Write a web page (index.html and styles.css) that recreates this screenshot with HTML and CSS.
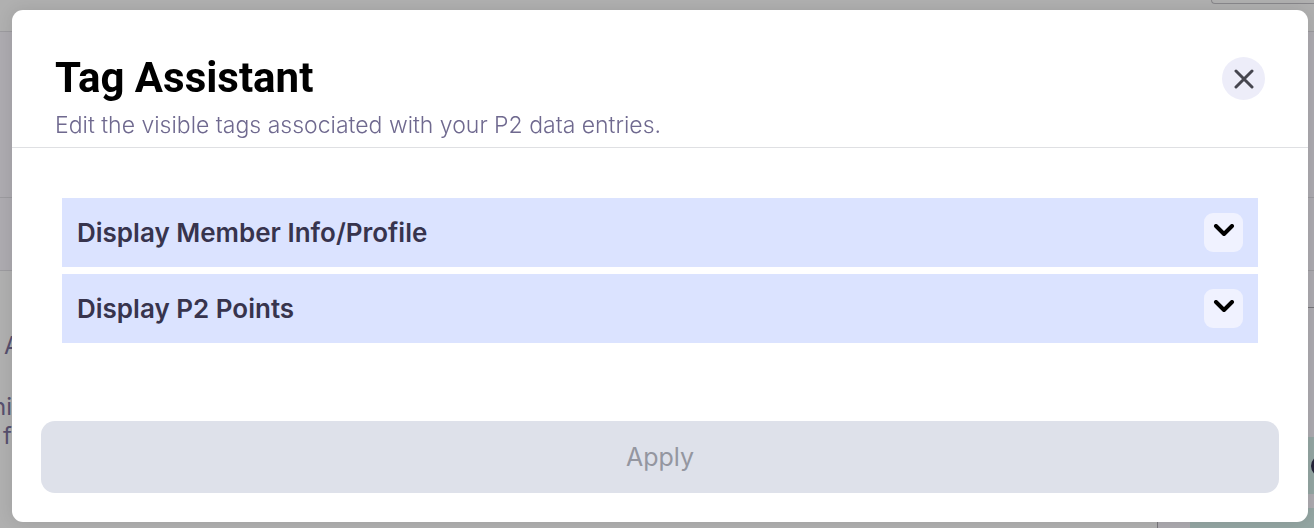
FILE: index.html
```html
<!DOCTYPE html>
<html lang="en">
<head>
  <meta charset="UTF-8">
  <title>Tag Assistant</title>
  <meta name="viewport" content="width=device-width, initial-scale=1">
  <link rel="stylesheet" href="styles.css">
</head>
<body>
  <!-- page behind the modal -->
  <div class="page" aria-hidden="true">
    <div class="page-top"><div class="page-search"></div></div>
    <div class="page-banner"></div>
    <div class="page-tabs"></div>
    <div class="page-main">
      <div class="page-left">
        <p class="name">A</p>
        <p>ni</p>
        <p>f</p>
      </div>
      <div class="page-right">
        <div class="page-line"></div>
        <div class="page-tag"><span class="dot"></span></div>
        <div class="page-foot"><div class="page-tag-wide"></div></div>
      </div>
    </div>
  </div>

  <div class="overlay">
    <div class="modal" role="dialog" aria-modal="true" aria-labelledby="modalTitle">
      <div class="modal-header">
        <div>
          <h2 id="modalTitle">Tag Assistant</h2>
          <p class="subtitle">Edit the visible tags associated with your P2 data entries.</p>
        </div>
        <button class="close-btn" type="button" aria-label="Close">
          <svg width="20" height="20" viewBox="0 0 20 20"><path d="M2 2L18 18M18 2L2 18"/></svg>
        </button>
      </div>

      <div class="modal-body">
        <div class="section">
          <span id="memberLabel">Display Member Info/Profile</span>
          <button class="toggle-btn" type="button" aria-labelledby="memberLabel" aria-expanded="false">
            <svg width="22" height="14" viewBox="0 0 22 14"><path d="M3 2L11 10L19 2"/></svg>
          </button>
        </div>
        <div class="section">
          <span id="pointsLabel">Display P2 Points</span>
          <button class="toggle-btn" type="button" aria-labelledby="pointsLabel" aria-expanded="false">
            <svg width="22" height="14" viewBox="0 0 22 14"><path d="M3 2L11 10L19 2"/></svg>
          </button>
        </div>
      </div>

      <div class="modal-footer">
        <button class="apply-btn" type="button" disabled>Apply</button>
      </div>
    </div>
  </div>
</body>
</html>
```
FILE: styles.css
```css
* { box-sizing: border-box; }
body { font-family: Inter, sans-serif; margin: 0; background: #b0b0b0; overflow: hidden; }
h2, p { margin: 0; }
button { font-family: inherit; border: none; padding: 0; cursor: pointer; }
svg { display: block; fill: none; stroke-linecap: round; stroke-linejoin: round; }

/* page behind */
.page { height: 100vh; display: flex; flex-direction: column; overflow: hidden; color: #57506e; font-size: 24px; line-height: 29px; }
.page-top { height: 32px; border-bottom: 1px solid #9c9b9f; display: flex; justify-content: flex-end; }
.page-search { width: 103px; height: 4px; border: 1px solid #88878b; border-width: 0 0 1px 1px; border-radius: 0 0 0 8px; }
.page-banner { height: 166px; background: #adabb0; border-bottom: 1px solid #9c9b9f; }
.page-tabs { height: 73px; background: #adabb0; border-bottom: 1px solid #9c9b9f; }
.page-main { flex: 1; display: flex; justify-content: space-between; min-height: 0; }
.page-left { width: 12px; padding-top: 60px; display: flex; flex-direction: column; align-items: flex-end; }
.page-left .name { align-self: flex-start; padding-left: 4px; margin-bottom: 32px; }
.page-right { width: 157px; background: #adabb0; display: flex; flex-direction: column; border-left: 1px solid #77767a; }
.page-line { height: 37px; border-bottom: 1px solid #77767a; }
.page-tag { margin-top: 129px; height: 57px; background: #94a6a3; display: flex; justify-content: flex-end; align-items: center; overflow: hidden; }
.dot { width: 22px; height: 22px; margin-right: -19px; border-radius: 50%; background: #24243a; flex: none; }
.page-foot { flex: 1; padding: 14px 0 0 32px; }
.page-tag-wide { height: 100%; background: #94a6a3; border-radius: 8px 0 0 0; }

/* modal */
.overlay { position: fixed; inset: 0; padding: 10px 6px 6px 12px; }
.modal { background: white; border-radius: 11px; box-shadow: 0 0 16px rgba(0,0,0,0.1); }
.modal-header { display: flex; justify-content: space-between; align-items: flex-start; padding: 44px 43px 8px; border-bottom: 1px solid #dfe0e3; }
.modal-header h2 { font-family: Roboto, sans-serif; font-size: 42px; line-height: 48px; font-weight: 700; color: black; }
.subtitle { margin-top: 9px; font-size: 23px; line-height: 28px; font-weight: 300; color: #6f698f; }
.close-btn { width: 43px; height: 43px; margin-top: 3px; border-radius: 50%; background: #ededf9; display: grid; place-items: center; }
.close-btn svg { stroke: #46464f; stroke-width: 3; }
.modal-body { padding: 50px 50px 49px; display: flex; flex-direction: column; gap: 7px; }
.section { display: flex; justify-content: space-between; align-items: center; padding: 15px; background: #dbe3ff; color: #37344d; font-size: 26px; line-height: 32px; font-weight: 600; }
.toggle-btn { width: 39px; height: 39px; border-radius: 9px; background: #f0f2ff; display: grid; place-items: center; padding-bottom: 4px; }
.toggle-btn svg { stroke: black; stroke-width: 4; }
.modal-footer { padding: 29px; }
.apply-btn { width: 100%; height: 72px; border-radius: 14px; background: #dee1ea; color: #9496a0; font-size: 25px; cursor: default; }
```
